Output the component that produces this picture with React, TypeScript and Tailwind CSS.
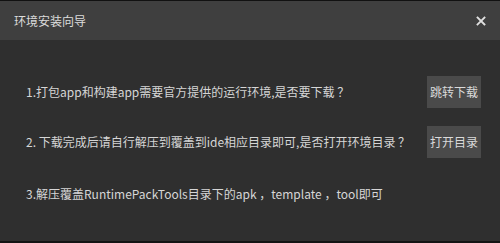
import React from "react";

const font = { fontFamily: '"Microsoft YaHei", "Noto Sans CJK SC", "Noto Sans", sans-serif' };

export default function App() {
  return (
    <div
      className="w-[500px] h-[243px] flex flex-col border-t border-t-[#111] border-b-2 border-b-[#141414] bg-[#2f2f2f] text-[#d6d6d6]"
      style={font}
    >
      <div className="h-[39px] shrink-0 bg-[#3f3f3f] flex items-center justify-between pl-[14px] pr-[14px]">
        <span className="text-[12px] text-[#dcdcdc] leading-none">环境安装向导</span>
        <svg width="10" height="10" viewBox="0 0 10 10" className="text-[#e0e0e0]">
          <path d="M1.5 1.5 L8.5 8.5 M8.5 1.5 L1.5 8.5" stroke="currentColor" strokeWidth="1.8" strokeLinecap="square" />
        </svg>
      </div>
      <div className="flex-1 flex flex-col pl-[26px] pr-[19px] pt-[36px]">
        <div className="h-[32px] flex items-center justify-between">
          <span className="text-[12px] leading-none whitespace-nowrap">1.打包app和构建app需要官方提供的运行环境,是否要下载 ？</span>
          <button className="w-[54px] h-[32px] bg-[#4a4a4a] text-[12px] text-[#dadada] leading-none">跳转下载</button>
        </div>
        <div className="h-[32px] mt-[18px] flex items-center justify-between">
          <span className="text-[12px] leading-none whitespace-nowrap">2. 下载完成后请自行解压到覆盖到ide相应目录即可,是否打开环境目录 ？</span>
          <button className="w-[54px] h-[32px] bg-[#4a4a4a] text-[12px] text-[#dadada] leading-none">打开目录</button>
        </div>
        <div className="h-[32px] mt-[20px] flex items-center">
          <span className="text-[12px] leading-none whitespace-nowrap">3.解压覆盖RuntimePackTools目录下的apk ，template ，tool即可</span>
        </div>
      </div>
    </div>
  );
}
